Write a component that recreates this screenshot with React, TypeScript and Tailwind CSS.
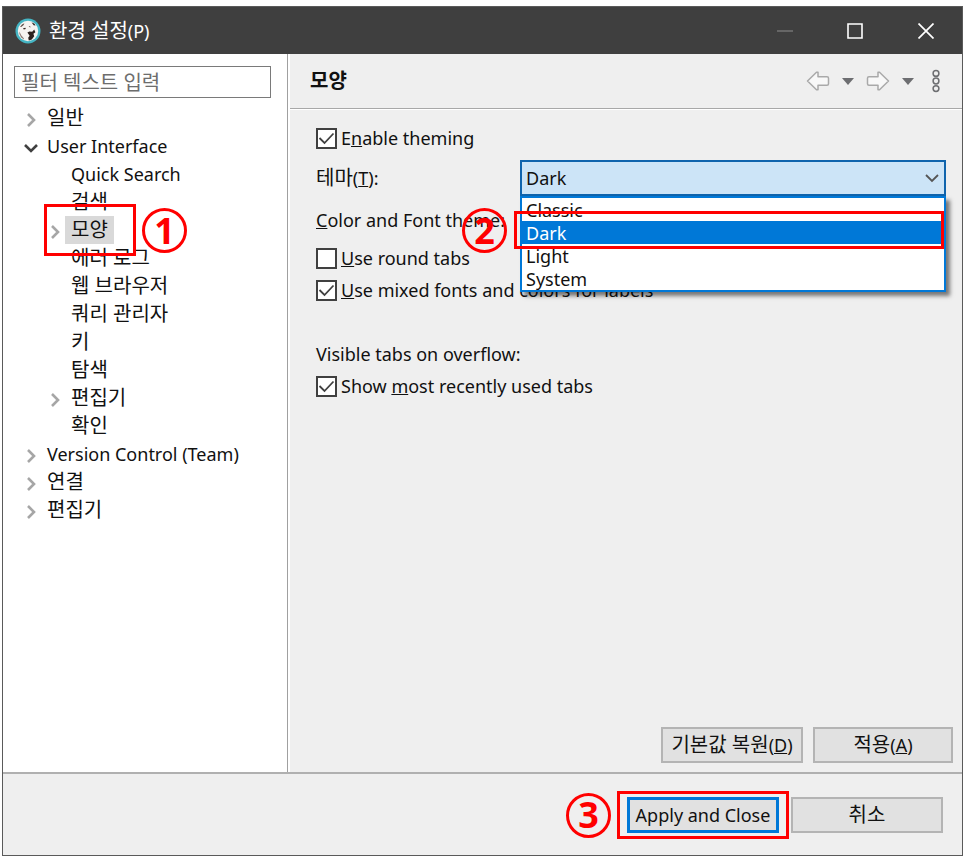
import React from "react";

const FONT = "font-['Noto_Sans','Noto_Sans_CJK_KR',sans-serif]";

interface TreeNode {
  label: string;
  level: 0 | 1;
  state: "leaf" | "closed" | "open";
  selected?: boolean;
}

const TREE: TreeNode[] = [
  { label: "일반", level: 0, state: "closed" },
  { label: "User Interface", level: 0, state: "open" },
  { label: "Quick Search", level: 1, state: "leaf" },
  { label: "검색", level: 1, state: "leaf" },
  { label: "모양", level: 1, state: "closed", selected: true },
  { label: "에러 로그", level: 1, state: "leaf" },
  { label: "웹 브라우저", level: 1, state: "leaf" },
  { label: "쿼리 관리자", level: 1, state: "leaf" },
  { label: "키", level: 1, state: "leaf" },
  { label: "탐색", level: 1, state: "leaf" },
  { label: "편집기", level: 1, state: "closed" },
  { label: "확인", level: 1, state: "leaf" },
  { label: "Version Control (Team)", level: 0, state: "closed" },
  { label: "연결", level: 0, state: "closed" },
  { label: "편집기", level: 0, state: "closed" },
];

const THEMES = ["Classic", "Dark", "Light", "System"];

function isKorean(text: string) {
  return /[가-힣]/.test(text);
}

function AppLogo() {
  return (
    <svg width="26" height="26" viewBox="0 0 26 26" aria-hidden="true">
      <circle cx="13" cy="13" r="12.5" fill="#45b5c4" />
      <circle cx="13" cy="13" r="10.2" fill="#f6f3f1" />
      <path d="M5 9l2-2.6 2.4-1.2-.8 1.8L6.600 8.800z" fill="#5b4a44" />
      <path d="M16.500 4.200l3 1.600 1 1.800-1.800-.4z" fill="#2c211e" />
      <path d="M8 10.200l2.400-.4.400 1.200-2 .4zM13.600 8.600l1.600-.4.200 1.200z" fill="#3a2c28" />
      <path d="M12.400 14.600l2-1.200 2.800.4 2-2.200 1.200 2.600-2 1.600.8 2.400-2.400 3.400-3 1-.6-2.800 1.400-2z" fill="#2c211e" />
      <path d="M4.400 13.400l1.800 3.800 2.600 3 .2 1.400-2.800-2-1.800-3.600z" fill="#8b7a74" />
    </svg>
  );
}

function Twisty({ state }: { state: TreeNode["state"] }) {
  if (state === "leaf") return <span className="w-4" />;
  return (
    <svg className="mt-1" width="16" height="16" viewBox="0 0 16 16" fill="none" aria-hidden="true">
      {state === "open" ? (
        <path d="M2 5l6 6 6-6" stroke="#404040" strokeWidth="2.6" />
      ) : (
        <path d="M5 2l6 6-6 6" stroke="#a6a6a6" strokeWidth="2.6" />
      )}
    </svg>
  );
}

// Red circled number used for the step markers
function Step({ n, className }: { n: number; className: string }) {
  return (
    <span
      className={`absolute z-20 flex size-[45px] items-center justify-center rounded-full border-3 border-[#ff0000] text-4xl font-bold text-[#ff0000] ${className}`}
    >
      {n}
    </span>
  );
}

function Frame({ className }: { className: string }) {
  return <span className={`pointer-events-none absolute z-20 border-3 border-[#ff0000] ${className}`} />;
}

function CheckRow({ id, checked = false, children }: { id: string; checked?: boolean; children: React.ReactNode }) {
  return (
    <div className="flex h-8 items-center gap-1">
      <span className="relative flex size-[21px]">
        <input
          id={id}
          type="checkbox"
          defaultChecked={checked}
          className="peer size-[21px] appearance-none border-2 border-[#404040] bg-white"
        />
        <svg
          className="pointer-events-none absolute inset-0 hidden peer-checked:block"
          width="21"
          height="21"
          viewBox="0 0 21 21"
          fill="none"
          aria-hidden="true"
        >
          <path d="M3.500 10l5 5 9-9.500" stroke="#404040" strokeWidth="1.8" />
        </svg>
      </span>
      <label htmlFor={id} className="whitespace-nowrap">
        {children}
      </label>
    </div>
  );
}

function TitleBar() {
  return (
    <header className="flex h-[47px] shrink-0 items-center bg-[#3f3f3f] pl-3 text-white">
      <AppLogo />
      <h1 className="ml-2 flex-1 text-lg">
        <span className="text-xl">환경 설정</span>(P)
      </h1>
      <button aria-label="Minimize" className="flex h-full w-[70px] items-center justify-center">
        <svg width="16" height="16" viewBox="0 0 16 16">
          <path d="M0 8h16" stroke="#757575" strokeWidth="1.5" />
        </svg>
      </button>
      <button aria-label="Maximize" className="flex h-full w-[70px] items-center justify-center">
        <svg width="16" height="16" viewBox="0 0 16 16">
          <path d="M1 1h14v14H1z" fill="none" stroke="#fff" strokeWidth="1.6" />
        </svg>
      </button>
      <button aria-label="Close" className="flex h-full w-[72px] items-center justify-center">
        <svg width="16" height="16" viewBox="0 0 16 16">
          <path d="M.5.5l15 15M15.5.5l-15 15" stroke="#fff" strokeWidth="1.7" />
        </svg>
      </button>
    </header>
  );
}

function Sidebar() {
  return (
    <aside className="w-[285px] shrink-0 border-r border-[#a0a0a0] bg-white pt-3">
      <input
        aria-label="필터 텍스트 입력"
        placeholder="필터 텍스트 입력"
        className="ml-[11px] block h-8 w-[257px] border border-[#7a7a7a] px-1.5 text-xl placeholder:text-[#6d6d6d]"
      />
      <ul className="pt-[6px]">
        {TREE.map((node, i) => (
          <li
            key={i}
            className={`relative flex h-7 items-center whitespace-nowrap ${node.level === 1 ? "pl-11" : "pl-5"}`}
          >
            <Twisty state={node.state} />
            <span
              className={`ml-0.5 flex h-7 items-center px-1.5 ${node.selected ? "bg-[#d9d9d9]" : ""} ${
                isKorean(node.label) ? "text-xl" : "text-lg"
              }`}
            >
              {node.label}
            </span>
            {node.selected && (
              <>
                <Frame className="-top-3 left-[41px] h-[52px] w-[92px]" />
                <Step n={1} className="-top-2 left-[139px]" />
              </>
            )}
          </li>
        ))}
      </ul>
    </aside>
  );
}

function HistoryArrow({ flip = false }: { flip?: boolean }) {
  return (
    <svg className={flip ? "-scale-x-100" : ""} width="24" height="20" viewBox="0 0 24 20" aria-hidden="true">
      <path
        d="M1.500 10L10.500 1.200h1.500v4.600h9a1.500 1.500 0 0 1 1.500 1.500v5.400a1.500 1.500 0 0 1-1.500 1.500h-9v4.600h-1.500z"
        fill="#f8f8f8"
        stroke="#a9a9a9"
        strokeWidth="1.5"
        strokeLinejoin="round"
      />
    </svg>
  );
}

function Caret() {
  return (
    <svg width="12" height="7" viewBox="0 0 12 7" aria-hidden="true">
      <path d="M0 0h12L6 7z" fill="#6d6e71" />
    </svg>
  );
}

function PageHeader() {
  return (
    <div className="flex h-[55px] items-center border-b border-[#a8a8a8] pr-[22px] pl-5">
      <h2 className="flex-1 text-xl font-bold">모양</h2>
      <div className="flex items-center gap-3">
        <button aria-label="Back"><HistoryArrow /></button>
        <button aria-label="Back history"><Caret /></button>
        <button aria-label="Forward"><HistoryArrow flip /></button>
        <button aria-label="Forward history"><Caret /></button>
        <button aria-label="Menu" className="ml-1.5">
          <svg width="8" height="24" viewBox="0 0 8 24" fill="none" stroke="#6d6e71" strokeWidth="1.5">
            <circle cx="4" cy="4.400" r="2.900" />
            <circle cx="4" cy="12" r="2.900" />
            <circle cx="4" cy="19.600" r="2.900" />
          </svg>
        </button>
      </div>
    </div>
  );
}

function ThemeSelect() {
  return (
    <div className="relative flex-1">
      <select
        id="theme"
        defaultValue="Dark"
        className="block h-9 w-full appearance-none border-2 border-[#0f64ad] bg-[#cce4f7] px-1"
      >
        {THEMES.map((t) => (
          <option key={t}>{t}</option>
        ))}
      </select>
      <svg
        className="pointer-events-none absolute top-3 right-[7px]"
        width="14"
        height="12"
        viewBox="0 0 14 12"
        fill="none"
        aria-hidden="true"
      >
        <path d="M1 3l6 6 6-6" stroke="#555" strokeWidth="1.8" />
      </svg>
      <ul
        role="listbox"
        aria-label="테마"
        className="absolute inset-x-0 top-9 z-10 border-2 border-[#0078d7] bg-white shadow-[4px_4px_4px_rgba(0,0,0,0.5)]"
      >
        {THEMES.map((t) => (
          <li
            key={t}
            role="option"
            aria-selected={t === "Dark"}
            className={`flex h-[23px] items-center px-1 ${t === "Dark" ? "bg-[#0078d7] text-white" : ""}`}
          >
            {t}
          </li>
        ))}
      </ul>
      <Frame className="top-[51px] right-0.5 -left-1.5 h-[38px]" />
      <Step n={2} className="top-12 -left-[58px]" />
    </div>
  );
}

function AppearancePage() {
  return (
    <main className="flex min-w-0 flex-1 flex-col border-l-2 border-white">
      <PageHeader />
      <div className="flex-1 border-t border-white pt-3 pl-[26px]">
        <CheckRow id="enable-theming" checked>
          E<u>n</u>able theming
        </CheckRow>
        <div className="mt-1 flex h-10 items-center pr-4">
          <label htmlFor="theme" className="w-[204px] shrink-0">
            <span className="text-xl">테마</span>(<u>T</u>):
          </label>
          <ThemeSelect />
        </div>
        <p className="flex h-11 items-center">
          <span><u>C</u>olor and Font theme:</span>
        </p>
        <CheckRow id="round-tabs">
          <u>U</u>se round tabs
        </CheckRow>
        <CheckRow id="mixed-fonts" checked>
          <u>U</u>se mixed fonts and colors for labels
        </CheckRow>
        <p className="mt-8 flex h-8 items-center">Visible tabs on overflow:</p>
        <CheckRow id="recent-tabs" checked>
          Show <u>m</u>ost recently used tabs
        </CheckRow>
      </div>
      <div className="flex justify-end gap-2.5 pr-[9px] pb-[9px]">
        <button className="h-9 w-[142px] border-2 border-[#b4b4b4] bg-[#e1e1e1] whitespace-nowrap">
          <span className="text-xl">기본값 복원</span>(<u>D</u>)
        </button>
        <button className="h-9 w-[140px] border-2 border-[#b4b4b4] bg-[#e1e1e1] whitespace-nowrap">
          <span className="text-xl">적용</span>(<u>A</u>)
        </button>
      </div>
    </main>
  );
}

function Footer() {
  return (
    <footer className="flex h-[83px] shrink-0 items-center justify-end gap-3 border-t-2 border-[#b0b0b0] pr-[19px]">
      <div className="relative">
        <button className="h-9 w-[152px] border-3 border-[#0078d7] bg-[#e1e1e1] whitespace-nowrap">
          Apply and Close
        </button>
        <Frame className="-inset-x-2.5 -inset-y-1.5" />
        <Step n={3} className="-top-1 -left-[61px]" />
      </div>
      <button className="h-9 w-[152px] border-2 border-[#b4b4b4] bg-[#e1e1e1] text-xl">취소</button>
    </footer>
  );
}

export default function App() {
  return (
    <div className={`flex min-h-screen flex-col bg-white pt-1.5 pr-[3px] pb-[3px] pl-0.5 text-lg leading-none text-[#111] ${FONT}`}>
      <div className="flex flex-1 flex-col border border-[#5a5a5a] bg-[#efefef]">
        <TitleBar />
        <div className="flex flex-1">
          <Sidebar />
          <AppearancePage />
        </div>
        <Footer />
      </div>
    </div>
  );
}
